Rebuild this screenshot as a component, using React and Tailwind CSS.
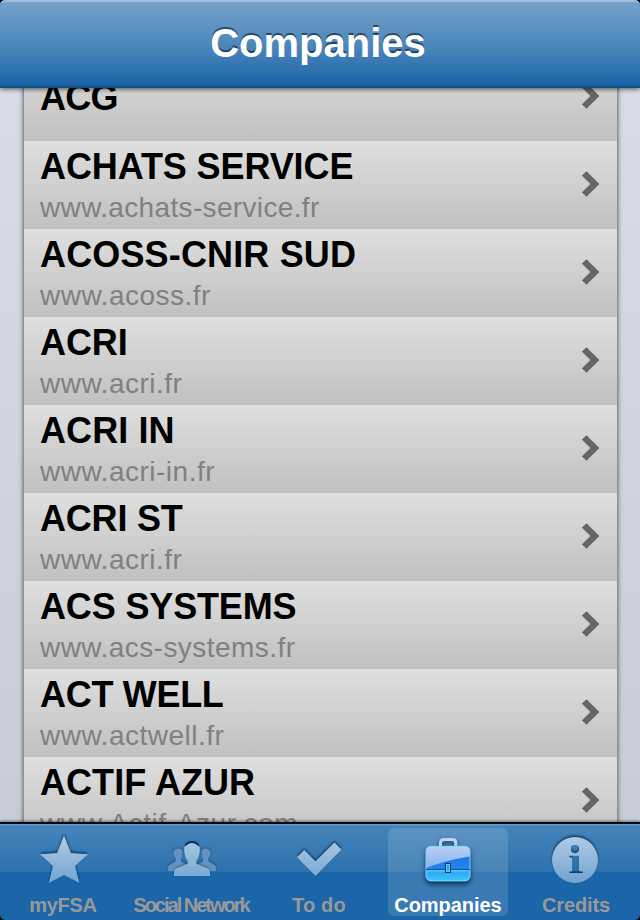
const companies = [
  { name: "ACG", url: "", spacing: "tracking-[-0.7px]", urlSpacing: "" },
  { name: "ACHATS SERVICE", url: "www.achats-service.fr", spacing: "tracking-[-0.1px]", urlSpacing: "tracking-[0.35px]" },
  { name: "ACOSS-CNIR SUD", url: "www.acoss.fr", spacing: "tracking-[0.15px]", urlSpacing: "tracking-[0.5px]" },
  { name: "ACRI", url: "www.acri.fr", spacing: "tracking-[-0.1px]", urlSpacing: "tracking-[0.5px]" },
  { name: "ACRI IN", url: "www.acri-in.fr", spacing: "tracking-[0.1px]", urlSpacing: "tracking-[0.5px]" },
  { name: "ACRI ST", url: "www.acri.fr", spacing: "tracking-[-0.2px]", urlSpacing: "tracking-[0.5px]" },
  { name: "ACS SYSTEMS", url: "www.acs-systems.fr", spacing: "tracking-[-0.15px]", urlSpacing: "tracking-[0.45px]" },
  { name: "ACT WELL", url: "www.actwell.fr", spacing: "tracking-[-0.3px]", urlSpacing: "tracking-[0.5px]" },
  { name: "ACTIF AZUR", url: "www.Actif-Azur.com", spacing: "tracking-[0.05px]", urlSpacing: "tracking-[0.6px]" },
];

function Chevron() {
  return (
    <svg className="mr-[17px] mb-0.5 h-[28px] w-[18px] shrink-0" viewBox="0 0 18 28">
      <path d="M2.2 3.4L12.9 14L2.2 24.6" fill="none" stroke="#666" strokeWidth="6.4" />
    </svg>
  );
}

function Row({ name, url, spacing, urlSpacing }) {
  return (
    <li className="flex h-[88px] shrink-0 items-center bg-linear-to-b from-[#dfdfdf] to-[#c0c0c0] pl-4">
      <div className={url ? "flex-1 pt-1 whitespace-nowrap" : "flex-1 pt-0.5 whitespace-nowrap"}>
        <div className={`text-[36px] leading-[42px] font-bold text-black ${spacing}`}>{name}</div>
        {url && <div className={`text-[28px] leading-[40px] text-[#808080] ${urlSpacing}`}>{url}</div>}
      </div>
      <Chevron />
    </li>
  );
}

function IconDefs() {
  return (
    <svg className="absolute h-0 w-0">
      <defs>
        <linearGradient id="glyph" x1="0" y1="10" x2="0" y2="60" gradientUnits="userSpaceOnUse">
          <stop offset="0" stopColor="#b3cee6" />
          <stop offset="1" stopColor="#70a3cf" />
        </linearGradient>
        <linearGradient id="gloss" x1="0" y1="0" x2="0" y2="1">
          <stop offset="0" stopColor="#bccff5" />
          <stop offset="1" stopColor="#83b5f2" />
        </linearGradient>
        <linearGradient id="caseTop" x1="0" y1="0" x2="0" y2="1">
          <stop offset="0" stopColor="#176ae8" />
          <stop offset="1" stopColor="#2b91f5" />
        </linearGradient>
        <linearGradient id="caseBottom" x1="0" y1="0" x2="0" y2="1">
          <stop offset="0" stopColor="#259df0" />
          <stop offset="1" stopColor="#3fc6ff" />
        </linearGradient>
        <filter id="etch" x="-20%" y="-20%" width="140%" height="140%" colorInterpolationFilters="sRGB">
          <feDropShadow dx="0" dy="-1.6" stdDeviation="0.8" floodColor="#06294b" floodOpacity="0.8" />
        </filter>
        <filter id="softEtch" x="-20%" y="-20%" width="140%" height="140%" colorInterpolationFilters="sRGB">
          <feDropShadow dx="0" dy="-1" stdDeviation="0.8" floodColor="#06294b" floodOpacity="0.45" />
        </filter>
        <filter id="lift" x="-30%" y="-30%" width="160%" height="170%" colorInterpolationFilters="sRGB">
          <feDropShadow dx="0" dy="3" stdDeviation="2.5" floodColor="#001c38" floodOpacity="0.8" />
        </filter>
      </defs>
    </svg>
  );
}

function StarIcon() {
  return (
    <path
      filter="url(#etch)"
      fill="url(#glyph)"
      d="M64 11.5L71 29L88 30.2L75 42L79.5 59L64 51L48.7 59L53 42L40 30.2L57 29Z"
    />
  );
}

function PeopleIcon() {
  return (
    <g>
      <g filter="url(#softEtch)" fill="#6093c1">
        <path d="M40 47V42.5Q42 40 47.3 37.5L48 35Q45.5 31.5 45.7 28.5Q46 24.5 50.3 24.5Q54.6 24.5 54.6 29Q54.6 32.5 52.8 35L53.3 37.5L58 40V47Z" />
        <path d="M88 47V42.5Q86 40 80.7 37.5L80 35Q82.5 31.5 82.3 28.5Q82 24.5 77.7 24.5Q73.4 24.5 73.4 29Q73.4 32.5 75.2 35L74.7 37.5L70 40V47Z" />
      </g>
      <path
        filter="url(#softEtch)"
        fill="url(#glyph)"
        d="M46 52V48.5Q46 45 50 43.8L59.5 39.8V36.5Q56.2 33 56.2 25.5Q56.2 19 64 19Q71.8 19 71.8 25.5Q71.8 33 68.5 36.5V39.8L78 43.8Q82 45 82 48.5V52Z"
      />
      <path d="M57.5 21.5Q59.5 18 64 18Q68.5 18 70.5 21.5" fill="none" stroke="#0b2f53" strokeWidth="1.8" />
    </g>
  );
}

function CheckIcon() {
  return (
    <path filter="url(#etch)" fill="url(#glyph)" d="M41 33.3L48.2 26L59.5 37.3L78.5 18.6L85.5 25.6L59.5 52Z" />
  );
}

function BriefcaseIcon() {
  return (
    <g filter="url(#lift)" transform="translate(0 -1.5)">
      <path d="M56.5 24V20.5Q56.5 17 60 17H68.5Q71.8 17 71.8 20.5V24" fill="none" stroke="#bdd3f3" strokeWidth="3" />
      <rect x="42" y="23.5" width="44" height="35" rx="5" fill="url(#caseTop)" />
      <path d="M42 45.5V28.5Q42 23.5 47 23.5H81Q86 23.5 86 28.5V34Q60 38 42 45.5Z" fill="url(#gloss)" />
      <path d="M42 46.5H86V53.5Q86 58.5 81 58.5H47Q42 58.5 42 53.5Z" fill="url(#caseBottom)" />
      <rect x="42" y="23.8" width="44" height="34.6" rx="5" fill="none" stroke="#75dcff" strokeWidth="1" />
      <path d="M42 47H86" stroke="#124e83" strokeWidth="1.2" />
      <path d="M42.5 48.3H85.5" stroke="#69dcff" strokeWidth="1" />
      <rect x="61.5" y="41" width="5" height="9" fill="#2b9df2" stroke="#103c64" strokeWidth="1" />
      <rect x="62.5" y="42" width="3" height="7" fill="none" stroke="#6bd9ff" strokeWidth="0.8" />
    </g>
  );
}

function InfoIcon() {
  return (
    <path
      filter="url(#etch)"
      fill="url(#glyph)"
      fillRule="evenodd"
      d="M63 13A23 23 0 1 1 63 59A23 23 0 1 1 63 13ZM63 21A4.1 4.1 0 1 0 63 29.2A4.1 4.1 0 1 0 63 21ZM57.3 31.8V33.2Q60.3 33.2 60.3 35V46Q60.3 47.5 57.3 47.5V49H71V47.5Q66.8 47.5 66.8 46V31.8Z"
    />
  );
}

const tabs = [
  { label: "myFSA", Icon: StarIcon, text: "mr-0.5 text-[#999] tracking-[-0.3px]" },
  { label: "Social Network", Icon: PeopleIcon, text: "mr-0.5 text-[#999] tracking-[-2px]" },
  { label: "To do", Icon: CheckIcon, text: "mr-0.5 text-[#999] tracking-[0.2px]" },
  { label: "Companies", Icon: BriefcaseIcon, text: "text-white tracking-[-0.05px]", selected: true },
  { label: "Credits", Icon: InfoIcon, text: "text-[#999] tracking-[-0.1px]" },
];

export default function App() {
  return (
    <div className="h-[920px] w-[640px] overflow-hidden bg-black font-['Liberation_Sans',Arial,sans-serif]">
      <div className="flex h-full flex-col">
        <header className="relative z-10 flex h-[88px] shrink-0 items-center justify-center rounded-t-[5px] border-t-2 border-b-2 border-t-[#9dbfdd] border-b-[#144f83] bg-linear-to-b from-[#74a2ca] via-[#4c88bc] to-[#1864a8] pr-1 pb-0.5 shadow-[0_1px_5px_rgba(0,0,0,0.65)]">
          <h1 className="text-[40px] leading-[46px] font-bold text-white [text-shadow:0_-2px_0_rgba(0,0,0,0.5)]">
            Companies
          </h1>
        </header>

        <main className="flex min-h-0 flex-1 justify-center overflow-hidden bg-linear-to-b from-[#d7dce7] to-[#c8ccd7] pl-px">
          <ul className="-mt-[35px] flex h-[792px] w-[593px] flex-col shadow-[0_0_0_1px_#8b9095,0_0_4px_1px_rgba(50,60,75,0.75)]">
            {companies.map((company) => (
              <Row key={company.name} {...company} />
            ))}
          </ul>
        </main>

        <nav className="relative z-10 flex h-[98px] shrink-0 rounded-b-[5px] border-t-2 border-[#050b16] bg-[linear-gradient(#6699c6_0px,#6699c6_1px,#4683ba_2px,#2c72ae_48px,#1b66a8_48px,#1b66a8_100%)] shadow-[0_-1px_3px_rgba(0,0,0,0.45)]">
          <IconDefs />
          {tabs.map(({ label, Icon, text, selected }) => (
            <div key={label} className="flex w-32 justify-center pt-1">
              <div
                className={
                  selected
                    ? "flex h-[88px] w-[120px] flex-col items-center rounded-md bg-white/13"
                    : "flex h-[88px] w-[120px] flex-col items-center"
                }
              >
                <svg className="-mt-1 h-[69px] w-32 shrink-0" viewBox="0 0 128 69">
                  <Icon />
                </svg>
                <span className={`text-[20px] leading-[24px] font-bold whitespace-nowrap ${text}`}>{label}</span>
              </div>
            </div>
          ))}
        </nav>
      </div>
    </div>
  );
}
